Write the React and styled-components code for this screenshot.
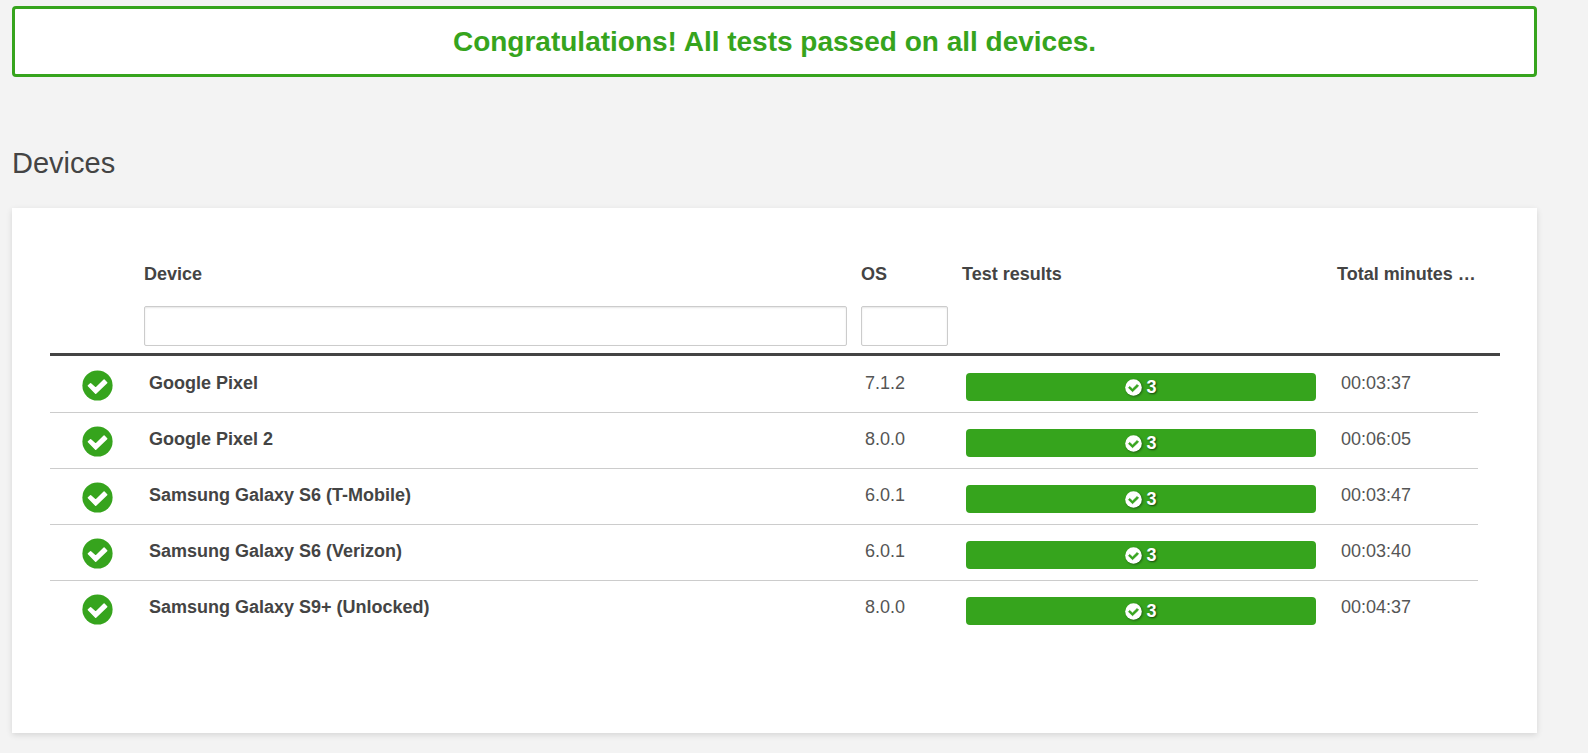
import React from "react";
import styled, { createGlobalStyle } from "styled-components";

const GREEN = "#36a41d";
const DARK = "#444444";

const GlobalStyle = createGlobalStyle`
  *, *::before, *::after { box-sizing: border-box; }
  body {
    margin: 0;
    background: #f3f3f3;
    color: ${DARK};
    font-family: "Liberation Sans", Arial, Helvetica, sans-serif;
    font-size: 18px;
    line-height: 24px;
  }
`;

const Page = styled.main`
  padding: 6px 51px 20px 12px;
`;

const Banner = styled.div`
  padding: 16px;
  border: 3px solid ${GREEN};
  border-radius: 4px;
  background: #fff;
  color: ${GREEN};
  font-size: 28px;
  font-weight: bold;
  line-height: 33px;
  text-align: center;
`;

const Heading = styled.h2`
  margin: 70px 0 28px;
  font-size: 29px;
  font-weight: normal;
  line-height: 33px;
`;

const Card = styled.section`
  padding: 54px 37px 96px 38px;
  background: #fff;
  box-shadow: 0 2px 6px rgba(0, 0, 0, 0.12);
`;

const Table = styled.table`
  width: 100%;
  table-layout: fixed;
  border-collapse: separate;
  border-spacing: 0;
`;

const Column = styled.col`
  width: ${(p) => (p.$width ? `${p.$width}px` : "auto")};
`;

const HeadCell = styled.th`
  padding: 0 7px 7px;
  border-bottom: 3px solid ${DARK};
  text-align: left;
  vertical-align: top;
  white-space: nowrap;
`;

const HeadGutter = styled.td`
  padding: 0;
  border-bottom: 3px solid ${DARK};
`;

const FilterLabel = styled.label`
  display: block;
`;

const FilterInput = styled.input`
  display: block;
  width: 100%;
  height: 40px;
  margin-top: 20px;
  padding: 0 8px;
  border: 1px solid #cccccc;
  border-radius: 2px;
  background: #fff;
  box-shadow: inset 0 1px 2px rgba(0, 0, 0, 0.1);
  color: inherit;
  font: inherit;
`;

const Row = styled.tr`
  height: 56px;

  &:first-child {
    height: 57px;
  }

  &:first-child > * {
    border-top: 1px solid transparent;
  }

  &:last-child > * {
    border-bottom: 0;
  }
`;

const Cell = styled.td`
  padding: 14px 11px 0;
  border-bottom: 1px solid #cccccc;
  color: #555555;
  text-align: left;
  vertical-align: top;
`;

const DeviceCell = styled(Cell).attrs({ as: "th", scope: "row" })`
  padding-left: 12px;
  color: ${DARK};
  font-weight: bold;
`;

const StatusCell = styled(Cell)`
  padding: 13px 0 0 32px;
`;

const ResultCell = styled(Cell)`
  padding: 16px 14px 0 11px;
`;

const StatusIcon = styled.svg`
  display: block;
  width: 31px;
  height: 31px;
  color: ${GREEN};
`;

const ResultBar = styled.div`
  display: flex;
  align-items: center;
  justify-content: center;
  gap: 4px;
  height: 28px;
  border-radius: 4px;
  background: ${GREEN};
  color: #fff;
  font-weight: bold;
  text-shadow: 1px 1px 2px rgba(0, 0, 0, 0.6);
`;

const ResultIcon = styled.svg`
  width: 17px;
  height: 17px;
  filter: drop-shadow(1px 1px 1px rgba(0, 0, 0, 0.4));
`;

function CheckShapes({ tick }) {
  return (
    <>
      <circle cx="15.5" cy="15.5" r="15.1" fill="currentColor" />
      <path
        d="M6.4 15.8L8.6 13.7L13.7 18.3L22.1 10.1L24.7 12.7L13.7 23.2Z"
        fill={tick}
        stroke={tick}
        strokeWidth="1.5"
        strokeLinejoin="round"
      />
    </>
  );
}

const devices = [
  { name: "Google Pixel", os: "7.1.2", passed: 3, time: "00:03:37" },
  { name: "Google Pixel 2", os: "8.0.0", passed: 3, time: "00:06:05" },
  { name: "Samsung Galaxy S6 (T-Mobile)", os: "6.0.1", passed: 3, time: "00:03:47" },
  { name: "Samsung Galaxy S6 (Verizon)", os: "6.0.1", passed: 3, time: "00:03:40" },
  { name: "Samsung Galaxy S9+ (Unlocked)", os: "8.0.0", passed: 3, time: "00:04:37" },
];

export default function App() {
  return (
    <>
      <GlobalStyle />
      <Page>
        <Banner role="status">Congratulations! All tests passed on all devices.</Banner>
        <Heading id="devices-heading">Devices</Heading>
        <Card>
          <Table aria-labelledby="devices-heading">
            <colgroup>
              <Column $width={87} />
              <Column />
              <Column $width={101} />
              <Column $width={375} />
              <Column $width={148} />
              <Column $width={22} />
            </colgroup>
            <thead>
              <tr>
                <HeadCell scope="col" aria-label="Status" />
                <HeadCell scope="col">
                  <FilterLabel htmlFor="filter-device">Device</FilterLabel>
                  <FilterInput id="filter-device" type="text" />
                </HeadCell>
                <HeadCell scope="col">
                  <FilterLabel htmlFor="filter-os">OS</FilterLabel>
                  <FilterInput id="filter-os" type="text" />
                </HeadCell>
                <HeadCell scope="col">Test results</HeadCell>
                <HeadCell scope="col">Total minutes …</HeadCell>
                <HeadGutter />
              </tr>
            </thead>
            <tbody>
              {devices.map((d) => (
                <Row key={d.name}>
                  <StatusCell>
                    <StatusIcon viewBox="0 0 31 31" role="img" aria-label="Passed">
                      <CheckShapes tick="#fff" />
                    </StatusIcon>
                  </StatusCell>
                  <DeviceCell>{d.name}</DeviceCell>
                  <Cell>{d.os}</Cell>
                  <ResultCell>
                    <ResultBar>
                      <ResultIcon viewBox="0 0 31 31" aria-hidden="true">
                        <CheckShapes tick={GREEN} />
                      </ResultIcon>
                      {d.passed}
                    </ResultBar>
                  </ResultCell>
                  <Cell>{d.time}</Cell>
                </Row>
              ))}
            </tbody>
          </Table>
        </Card>
      </Page>
    </>
  );
}
